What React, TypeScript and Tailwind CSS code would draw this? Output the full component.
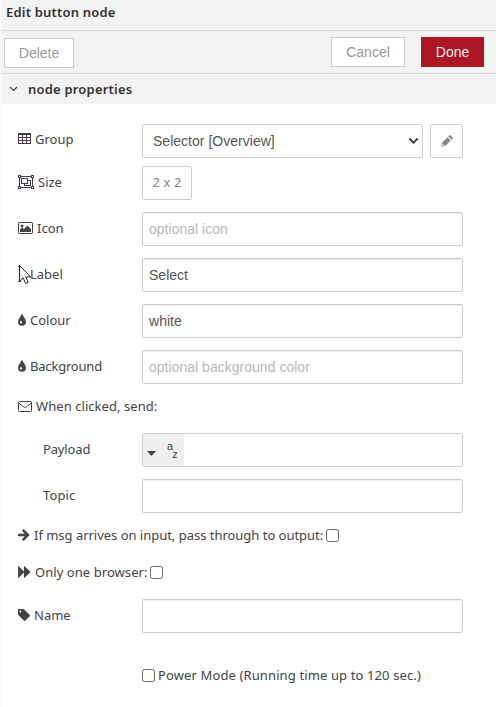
import type { ReactNode } from 'react';

const field =
  "h-[34px] w-[321px] rounded-[2px] border border-[#ccc] bg-white px-[6px] font-['Liberation_Sans',Arial,sans-serif] text-[14px] tracking-[0.02px] text-[#555] shadow-[inset_0_1px_1px_rgba(0,0,0,0.075)] outline-none placeholder:text-[#b8b8b8]";
const actionButton =
  "h-[30px] border font-['Liberation_Sans',Arial,sans-serif] text-[14px] leading-[28px]";
const check = 'size-[13px] shrink-0 appearance-none rounded-[2.5px] border border-[#666] bg-white';

function TableIcon() {
  return (
    <svg width="13" height="12" viewBox="0 0 13 12" fill="none" stroke="#443c48" shapeRendering="crispEdges">
      <path d="M.5 1.5h12v9H.5zM1 4.5h11M1 7.5h11M4.5 2v8M8.5 2v8" />
      <path d="M0 1h13" strokeWidth="2" />
    </svg>
  );
}

function GroupIcon() {
  return (
    <svg width="16" height="14" viewBox="0 0 16 14" fill="none" stroke="#443c48" shapeRendering="crispEdges">
      <path d="M1.5 1.5h13v11h-13z" />
      <path d="M3.5 3.5h6v5h-6zM10 5.5h2.5v5h-6V9" />
      <path d="M.5.5h2v2h-2zM13.5.5h2v2h-2zM.5 11.5h2v2h-2zM13.5 11.5h2v2h-2z" fill="#fff" />
    </svg>
  );
}

function ImageIcon() {
  return (
    <svg width="15" height="12" viewBox="0 0 15 12">
      <rect x=".5" y=".5" width="14" height="11" rx=".7" fill="#fff" stroke="#443c48" />
      <circle cx="4" cy="4" r="1.5" fill="#444" />
      <path d="M2 10V7.500l2-2 2 1.500L9.300 3.500 13 7v3z" fill="#444" />
    </svg>
  );
}

function DropIcon() {
  return (
    <svg width="8" height="12" viewBox="0 0 8 12">
      <path d="M4 0c.3 0 .5.2.6.5C5.300 2.900 8 4.800 8 7.700A4 4 0 0 1 0 7.700C0 4.800 2.700 2.900 3.400.5 3.500.2 3.700 0 4 0z" fill="#444" />
      <path d="M2.8 6.400C2.600 7.200 2 7.600 2 8.400a1 1 0 0 0 2 0c0-.8-.9-1.200-1.200-2z" fill="#fff" />
    </svg>
  );
}

function EnvelopeIcon() {
  return (
    <svg width="14" height="12" viewBox="0 0 14 12" fill="none" stroke="#444">
      <rect x=".5" y="1.500" width="13" height="10" rx=".8" />
      <path d="M.8 3.200 5.700 7c.9.7 1.700.7 2.600 0l4.900-3.800" />
    </svg>
  );
}

function ArrowIcon() {
  return (
    <svg width="12" height="12" viewBox="0 0 12 12" fill="none" stroke="#444" strokeWidth="2.500">
      <path d="M0 6h10M4.800.9 9.900 6l-5.100 5.100" />
    </svg>
  );
}

function ForwardIcon() {
  return (
    <svg width="13" height="12" viewBox="0 0 13 12" fill="#444">
      <path d="M0 .5c0-.4.3-.5.600-.2L6 5.500V.500c0-.4.3-.5.600-.2l5.600 5.300c.3.300.3.500 0 .8l-5.600 5.300c-.3.300-.6.200-.6-.2v-5L.600 11.700c-.3.300-.6.200-.6-.2z" />
    </svg>
  );
}

function TagIcon() {
  return (
    <svg width="13" height="12" viewBox="0 0 13 12">
      <path d="M.8 0h4c.5 0 1 .2 1.400.6l5.300 5.200c.5.500.5 1.100 0 1.600l-4.100 4.100c-.5.500-1.100.5-1.600 0L.6 6.300C.2 5.900 0 5.400 0 4.800v-4C0 .4.400 0 .8 0z" fill="#444" />
      <circle cx="2.500" cy="2.500" r="1" fill="#fff" />
    </svg>
  );
}

function PencilIcon() {
  return (
    <svg width="12" height="12" viewBox="0 0 12 12" fill="#888">
      <path d="m.8 8 5.700-5.700 3.200 3.200L4 11.200.4 11.600z" />
      <path d="m7.200 1.600 1-1c.5-.5 1-.5 1.500 0l1.700 1.700c.5.500.5 1 0 1.500l-1 1z" />
      <path d="M1.400 8.700v1h1v1h1" fill="none" stroke="#fff" strokeWidth=".7" />
    </svg>
  );
}

function Row({ icon, gap, label, top, height = 'h-[31px]', spacing = '', children }: {
  icon?: ReactNode; gap: string; label: string; top: string; height?: string; spacing?: string; children: ReactNode;
}) {
  return (
    <div className={`flex h-[34px] shrink-0 pl-[18px] ${top}`}>
      <label className={`flex w-[124px] shrink-0 items-center ${height} ${gap} ${spacing}`}>
        {icon}
        <span>{label}</span>
      </label>
      {children}
    </div>
  );
}

export default function App() {
  return (
    <main className="flex h-[707px] w-[496px] flex-col overflow-hidden border-l border-[#f8f8f8] bg-white font-['Noto_Sans','Open_Sans',sans-serif] text-[13px] leading-[20px] text-[#444]">
      <div className="-ml-px flex h-full flex-col">
        <header className="h-[31px] shrink-0 border-b border-[#ddd] bg-[#f3f3f3] pl-[6px] pt-[2px] font-semibold tracking-[0.2px] text-[#333]">
          Edit button node
        </header>
        <div className="flex h-[43px] shrink-0 items-start border-b border-[#ddd] bg-[#f3f3f3] pl-[4px] pr-[12px] pt-[6px]">
          <button className={`${actionButton} mt-px w-[70px] border-[#ccc] bg-white text-[#999]`}>Delete</button>
          <button className={`${actionButton} ml-auto w-[74px] border-[#ccc] bg-white text-[#999]`}>Cancel</button>
          <button className={`${actionButton} ml-[16px] w-[63px] border-[#ad1625] bg-[#ad1625] text-[#eee]`}>Done</button>
        </div>
        <div className="flex h-[30px] shrink-0 items-center bg-[#f3f3f3] pl-[9px] font-semibold tracking-[0.2px] text-[#333]">
          <svg width="9" height="6" viewBox="0 0 9 6" fill="none" stroke="#444" strokeWidth="1.1">
            <path d="m1 1 3.500 3.500L8 1" />
          </svg>
          <span className="ml-[10px]">node properties</span>
        </div>

        <form className="flex flex-col">
          <Row icon={<TableIcon />} gap="gap-[4px]" label="Group" top="mt-[20px]" height="h-[30px]">
            <div className="relative h-[34px]">
              <select className={`${field} w-[281px]! appearance-none pl-[10px]! shadow-none`}>
                <option>Selector [Overview]</option>
              </select>
              <svg className="pointer-events-none absolute right-[4px] top-[13px]" width="11" height="8" viewBox="0 0 11 8" fill="none" stroke="#444" strokeWidth="2">
                <path d="m1.300 1.500 4.200 4.200 4.200-4.200" />
              </svg>
            </div>
            <button type="button" className="ml-[7px] flex h-[34px] w-[33px] items-center justify-center rounded-[2px] border border-[#ccc] bg-white">
              <PencilIcon />
            </button>
          </Row>
          <Row icon={<GroupIcon />} gap="gap-[4px]" label="Size" top="mt-[8px]" height="h-[32px]">
            <button type="button" className="h-[34px] w-[50px] rounded-[2px] border border-[#ccc] bg-white pb-[2px] tracking-[0.1px] text-[#888]">2 x 2</button>
          </Row>
          <Row icon={<ImageIcon />} gap="gap-[4px]" label="Icon" top="mt-[12px]" height="h-[32px]">
            <input className={field} placeholder="optional icon" />
          </Row>
          <div className="relative">
            <Row icon={<span className="w-[9px]" />} gap="gap-[3px]" label="Label" top="mt-[12px]">
              <input className={field} defaultValue="Select" />
            </Row>
            <svg className="absolute left-[18px] top-[18px]" width="14" height="21" viewBox="0 0 14 21">
              <path d="M0 2.500h3M0 17.500h3" stroke="#444" />
              <path d="M1.500 1.500v15.800l3.600-3.500 2.500 5.700 2.600-1.200-2.500-5.300h5.100z" fill="#fff" stroke="#222" />
            </svg>
          </div>
          <Row icon={<DropIcon />} gap="gap-[4px]" label="Colour" top="mt-[12px]">
            <input className={field} defaultValue="white" />
          </Row>
          <Row icon={<DropIcon />} gap="gap-[4px]" label="Background" top="mt-[12px]" spacing="tracking-[-0.2px]">
            <input className={field} placeholder="optional background color" />
          </Row>
          <div className="mt-[12px] flex h-[20px] items-center gap-[4px] pl-[18px] tracking-[0.06px]">
            <EnvelopeIcon />
            <span>When clicked, send:</span>
          </div>
          <Row gap="pl-[25px]" label="Payload" top="mt-[17px]" spacing="tracking-[-0.15px]">
            <div className="flex h-[34px] w-[321px] overflow-hidden rounded-[2px] border border-[#ccc] bg-white">
              <button type="button" className="flex w-[41px] items-start bg-[#eee] pl-[4px] font-['Liberation_Sans',Arial,sans-serif] text-[11px] leading-[8px] text-[#444]">
                <svg className="mt-[17px]" width="9" height="5" viewBox="0 0 9 5"><path d="M0 0h9L4.500 5z" fill="#444" /></svg>
                <span className="ml-[11px] mt-[8px]">a</span>
                <span className="-ml-px mt-[16px]">z</span>
              </button>
            </div>
          </Row>
          <Row gap="pl-[25px]" label="Topic" top="mt-[12px]" spacing="tracking-[0.1px]">
            <input className={field} />
          </Row>
          <label className="mt-[12px] flex h-[20px] items-center gap-[4px] pl-[18px] tracking-[-0.02px]">
            <ArrowIcon />
            <span className="w-[288px] whitespace-nowrap">If msg arrives on input, pass through to output:</span>
            <input type="checkbox" className={check} />
          </label>
          <label className="mt-[17px] flex h-[20px] items-center gap-[4px] pl-[18px] tracking-[0.06px]">
            <ForwardIcon />
            <span className="w-[111px] whitespace-nowrap">Only one browser:</span>
            <input type="checkbox" className={check} />
          </label>
          <Row icon={<TagIcon />} gap="gap-[3px]" label="Name" top="mt-[17px]">
            <input className={field} />
          </Row>
          <label className="mt-[32px] flex h-[20px] items-center gap-[3px] pl-[142px] tracking-[0.12px]">
            <input type="checkbox" className={check} />
            <span>Power Mode (Running time up to 120 sec.)</span>
          </label>
        </form>
      </div>
    </main>
  );
}
